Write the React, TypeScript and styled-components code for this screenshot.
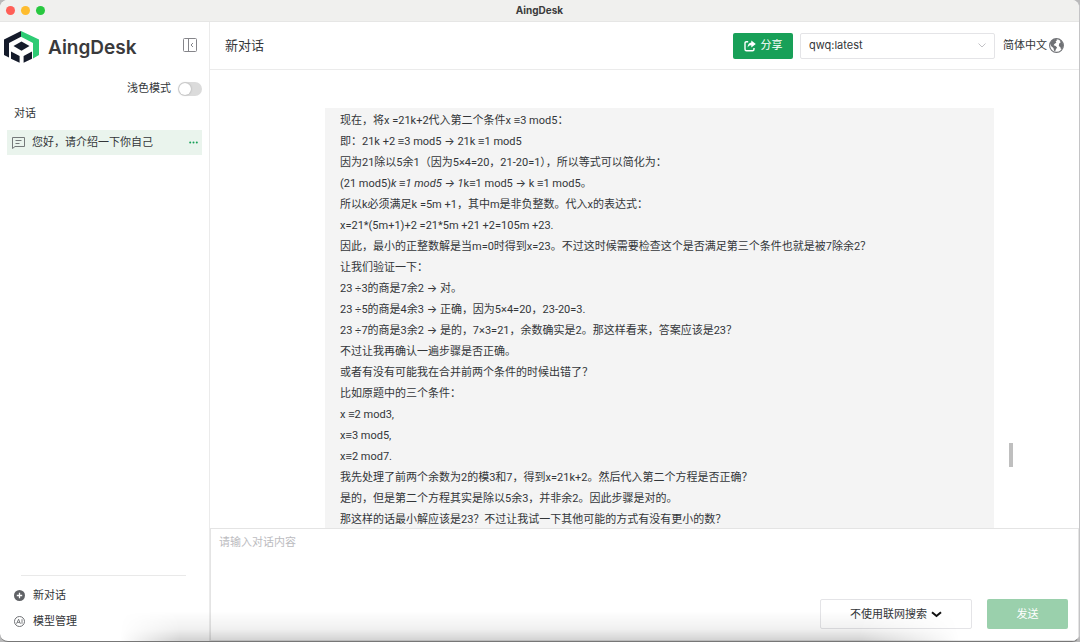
import React from 'react';
import styled, { createGlobalStyle } from 'styled-components';

const GlobalStyle = createGlobalStyle`
  *, *::before, *::after { box-sizing: border-box; }
  body {
    margin: 0;
    background: #b9b9ba;
    color: #333639;
    font-family: Roboto, Inter, "Liberation Sans", "Noto Sans CJK SC", sans-serif;
    font-size: 11px;
    line-height: 21px;
  }
  button, select, textarea { font: inherit; color: inherit; margin: 0; }
  button { padding: 0; border: 0; background: none; cursor: pointer; }
  p, h1, h2 { margin: 0; }
  svg { display: block; flex: none; }
`;

const Window = styled.div`
  position: relative;
  display: flex;
  flex-direction: column;
  height: 100vh;
  border-right: 1px solid #c4c4c6;
  border-bottom: 1px solid #777777;
  border-radius: 8px;
  background: #ffffff;
  overflow: hidden;
`;

const TitleBar = styled.header`
  display: grid;
  grid-template-columns: 1fr auto 1fr;
  align-items: center;
  flex: none;
  height: 22px;
  padding: 0 6px;
  border-bottom: 1px solid #e6e6e5;
  background: #f0f0ee;
`;

const Lights = styled.div`
  display: flex;
  gap: 6px;
`;

const Light = styled.span<{ $color: string }>`
  width: 9px;
  height: 9px;
  border-radius: 50%;
  background: ${(p) => p.$color};
`;

const WindowTitle = styled.span`
  color: #3c3c3c;
  font-family: Inter, sans-serif;
  font-size: 10px;
  font-weight: 700;
`;

const Columns = styled.div`
  display: flex;
  flex: 1;
  min-height: 0;
`;

const Sidebar = styled.aside`
  display: flex;
  flex-direction: column;
  flex: none;
  width: 210px;
  border-right: 1px solid #ebebeb;
`;

const Brand = styled.div`
  display: flex;
  align-items: center;
  height: 50px;
  padding: 0 12px 0 4px;
`;

const BrandName = styled.h1`
  flex: 1;
  margin-left: 9px;
  color: #3a3a3c;
  font-family: Inter, sans-serif;
  font-size: 19px;
  font-weight: 600;
`;

const CollapseButton = styled.button`
  padding-bottom: 4px;
`;

const ModeRow = styled.label`
  display: flex;
  align-items: center;
  justify-content: flex-end;
  gap: 7px;
  height: 33px;
  padding-right: 7px;
`;

const Switch = styled.input`
  appearance: none;
  display: flex;
  align-items: center;
  width: 24px;
  height: 14px;
  margin: 0;
  padding: 0 1px;
  border-radius: 7px;
  background: #dbdbdb;
  &::before {
    content: "";
    width: 12px;
    height: 12px;
    border-radius: 50%;
    background: #ffffff;
    box-shadow: 0 0 2px #999999;
  }
  &:checked { justify-content: flex-end; background: #18a058; }
`;

const SectionLabel = styled.h2`
  padding: 0 14px;
  margin-bottom: 7px;
  font-size: 11px;
  font-weight: 400;
  line-height: 18px;
`;

const Conversation = styled.div`
  display: flex;
  align-items: center;
  height: 25px;
  margin: 0 7px;
  padding: 0 4px 0 5px;
  background: #eaf4ed;
`;

const ConversationName = styled.button`
  display: flex;
  align-items: center;
  flex: 1;
  gap: 7px;
`;

const BottomNav = styled.nav`
  display: flex;
  flex-direction: column;
  gap: 5px;
  margin-top: auto;
  padding: 0 14px 9px;
  &::before {
    content: "";
    height: 1px;
    margin: 0 9px 4px 7px;
    background: #e9e9e9;
  }
`;

const NavButton = styled.button`
  display: flex;
  align-items: center;
  gap: 8px;
`;

const Main = styled.main`
  display: flex;
  flex-direction: column;
  flex: 1;
  min-width: 0;
`;

const Toolbar = styled.div`
  display: flex;
  align-items: center;
  flex: none;
  height: 48px;
  padding: 0 15px;
  border-bottom: 1px solid #ebebeb;
`;

const ChatTitle = styled.h2`
  flex: 1;
  font-size: 13px;
  font-weight: 400;
`;

const ShareButton = styled.button`
  display: flex;
  align-items: center;
  justify-content: center;
  gap: 5px;
  width: 60px;
  height: 26px;
  margin-right: 7px;
  border-radius: 2px;
  background: #18a058;
  color: #ffffff;
`;

const SelectBox = styled.div`
  display: grid;
  align-items: center;
  width: 195px;
  height: 26px;
  border: 1px solid #e4e4e7;
  border-radius: 2px;
  background: #ffffff;
  & > * { grid-area: 1 / 1; }
  & > svg { justify-self: end; margin-right: 8px; pointer-events: none; }
`;

const ModelSelect = styled.select`
  appearance: none;
  width: 100%;
  height: 100%;
  padding: 0 24px 0 8px;
  border: 0;
  background: none;
  font-family: Inter, sans-serif;
`;

const LanguageButton = styled.button`
  display: flex;
  align-items: center;
  gap: 2px;
  margin-left: 8px;
`;

const Scroller = styled.section`
  display: flex;
  flex: 1;
  min-height: 0;
  padding: 38px 66px 0 115px;
  overflow: hidden;
`;

const Message = styled.article`
  flex: 1;
  padding: 2px 15px 0;
  background: #f4f4f4;
  overflow: hidden;
  white-space: nowrap;
`;

const ScrollThumb = styled.div`
  flex: none;
  align-self: flex-end;
  width: 4px;
  height: 24px;
  margin: 0 0 61px 15px;
  background: #bfbfbf;
`;

const Composer = styled.form`
  display: flex;
  flex-direction: column;
  flex: none;
  height: 113px;
  border: 1px solid #e4e4e4;
`;

const Prompt = styled.textarea`
  flex: 1;
  padding: 3px 8px;
  border: 0;
  outline: 0;
  resize: none;
  background: none;
  &::placeholder { color: #bcbcbf; opacity: 1; }
`;

const Actions = styled.div`
  display: flex;
  justify-content: flex-end;
  gap: 15px;
  padding: 0 10px 11px;
`;

const SearchButton = styled.button`
  display: flex;
  align-items: center;
  justify-content: center;
  gap: 4px;
  width: 152px;
  height: 30px;
  border: 1px solid #e4e4e7;
  border-radius: 2px;
  background: #ffffff;
`;

const SendButton = styled.button`
  width: 81px;
  height: 30px;
  border-radius: 2px;
  background: #9ad0ac;
  color: #ffffff;
`;

const BottomShade = styled.div`
  position: absolute;
  right: 120px;
  bottom: 0;
  left: 120px;
  height: 30px;
  background: linear-gradient(to top, rgba(0, 0, 0, 0.18), rgba(0, 0, 0, 0.06) 40%, rgba(0, 0, 0, 0));
  mask-image: linear-gradient(to right, transparent, #000000 60px, #000000 calc(100% - 100px), transparent);
  pointer-events: none;
`;

const lines: React.ReactNode[] = [
  '现在，将x =21k+2代入第二个条件x ≡3 mod5：',
  '即：21k +2 ≡3 mod5 → 21k ≡1 mod5',
  '因为21除以5余1（因为5×4=20，21-20=1），所以等式可以简化为：',
  <>(21 mod5)<em>k ≡1 mod5 → 1</em>k≡1 mod5 → k ≡1 mod5。</>,
  '所以k必须满足k =5m +1，其中m是非负整数。代入x的表达式：',
  'x=21*(5m+1)+2 =21*5m +21 +2=105m +23.',
  '因此，最小的正整数解是当m=0时得到x=23。不过这时候需要检查这个是否满足第三个条件也就是被7除余2？',
  '让我们验证一下：',
  '23 ÷3的商是7余2 → 对。',
  '23 ÷5的商是4余3 → 正确，因为5×4=20，23-20=3.',
  '23 ÷7的商是3余2 → 是的，7×3=21，余数确实是2。那这样看来，答案应该是23？',
  '不过让我再确认一遍步骤是否正确。',
  '或者有没有可能我在合并前两个条件的时候出错了？',
  '比如原题中的三个条件：',
  'x ≡2 mod3,',
  'x≡3 mod5,',
  'x≡2 mod7.',
  '我先处理了前两个余数为2的模3和7，得到x=21k+2。然后代入第二个方程是否正确？',
  '是的，但是第二个方程其实是除以5余3，并非余2。因此步骤是对的。',
  '那这样的话最小解应该是23？不过让我试一下其他可能的方式有没有更小的数？',
];

const Logo = () => (
  <svg width="35" height="32" viewBox="0 0 35 32" aria-hidden="true">
    <path d="M17 0 0 8.5V24l5 2.6V12l12-6.2z" fill="#151b2b" />
    <path d="M17 0l18 8.5V24l-6 3.4V12L17 5.8z" fill="#2dcb74" />
    <path d="M17.5 10.4l8 4.7-8 4.6-8-4.6z" fill="#151b2b" />
    <path d="M7 20.4l8.6 4.6v6.8L7 27.8zM28 20.4 19.6 25v6.8l8.4-4z" fill="#151b2b" />
  </svg>
);

const CollapseIcon = () => (
  <svg width="14" height="14" viewBox="0 0 14 14" fill="none" stroke="#85858a" aria-hidden="true">
    <rect x=".5" y=".5" width="13" height="13" rx="1" />
    <path d="M5.5.5v13M10 5 8 7l2 2" />
  </svg>
);

const ChatIcon = () => (
  <svg width="13" height="12" viewBox="0 0 13 12" fill="none" stroke="#75797a" aria-hidden="true">
    <path d="M.5.5h12v9H3L.5 11.5zM3.5 3.5h6M3.5 6.5h4" />
  </svg>
);

const MoreIcon = () => (
  <svg width="9" height="3" viewBox="0 0 9 3" fill="#18a058" aria-hidden="true">
    <circle cx="1.2" cy="1.5" r="1" /><circle cx="4.5" cy="1.5" r="1" /><circle cx="7.8" cy="1.5" r="1" />
  </svg>
);

const PlusIcon = () => (
  <svg width="11" height="11" viewBox="0 0 11 11" aria-hidden="true">
    <circle cx="5.5" cy="5.5" r="5.5" fill="#606266" />
    <path d="M5.5 2.8v5.4M2.8 5.5h5.4" stroke="#ffffff" strokeWidth="1.3" />
  </svg>
);

const ModelIcon = () => (
  <svg width="11" height="11" viewBox="0 0 11 11" fill="none" stroke="#606266" aria-hidden="true">
    <circle cx="5.5" cy="5.5" r="5" strokeWidth=".9" />
    <path d="M2.5 7.8 4.6 3.2l1.8 4.6M3.3 6.4h2.5M8 3.2v4.6" strokeWidth=".8" />
  </svg>
);

const ShareIcon = () => (
  <svg width="12" height="12" viewBox="0 0 12 12" fill="none" stroke="#ffffff" aria-hidden="true">
    <path d="M4.2 1.7H2.5Q1 1.7 1 3.2v6q0 1.5 1.5 1.5h6q1.5 0 1.5-1.5V8" strokeWidth="1.4" />
    <path d="M7.3.6 11.8 4 7.3 7.4V5.3Q4.8 5.1 3.6 7.6 3.8 3 7.3 2.6z" fill="#ffffff" stroke="none" />
  </svg>
);

const ThinChevron = () => (
  <svg width="8" height="5" viewBox="0 0 8 5" fill="none" stroke="#c2c2c6" aria-hidden="true">
    <path d="M.5.5 4 4 7.5.5" />
  </svg>
);

const BoldChevron = () => (
  <svg width="11" height="7" viewBox="0 0 11 7" fill="none" stroke="#111111" aria-hidden="true">
    <path d="M1 1.2 5.5 5 10 1.2" strokeWidth="2" />
  </svg>
);

const GlobeIcon = () => (
  <svg width="15" height="15" viewBox="0 0 15 15" aria-hidden="true">
    <circle cx="7.5" cy="7.5" r="6.9" fill="#ffffff" stroke="#707276" strokeWidth="1.1" />
    <path d="M1 5.2 3.2 2 7 .8 8.2 2 6.6 3.4 7.4 4.6 5.4 6 4.6 7.2 6.6 8l1.5 1.6L6.8 11.4l-.8 2.4L5 12.6 4.4 10 2 8zM10.4 1.2l2.8 2.5 1 3L13.8 9.8 12 11.6l-.6-2.4L9.8 8l.4-2.4 1.4-1.2z" fill="#707276" />
  </svg>
);

export default function App() {
  return (
    <>
      <GlobalStyle />
      <Window>
        <TitleBar>
          <Lights>
            <Light $color="#ff5f57" />
            <Light $color="#febc2e" />
            <Light $color="#28c840" />
          </Lights>
          <WindowTitle>AingDesk</WindowTitle>
        </TitleBar>
        <Columns>
          <Sidebar>
            <Brand>
              <Logo />
              <BrandName>AingDesk</BrandName>
              <CollapseButton type="button" aria-label="收起侧栏"><CollapseIcon /></CollapseButton>
            </Brand>
            <ModeRow>
              浅色模式
              <Switch type="checkbox" role="switch" />
            </ModeRow>
            <SectionLabel>对话</SectionLabel>
            <Conversation>
              <ConversationName type="button"><ChatIcon />您好，请介绍一下你自己</ConversationName>
              <button type="button" aria-label="更多"><MoreIcon /></button>
            </Conversation>
            <BottomNav>
              <NavButton type="button"><PlusIcon />新对话</NavButton>
              <NavButton type="button"><ModelIcon />模型管理</NavButton>
            </BottomNav>
          </Sidebar>
          <Main>
            <Toolbar>
              <ChatTitle>新对话</ChatTitle>
              <ShareButton type="button"><ShareIcon />分享</ShareButton>
              <SelectBox>
                <ModelSelect aria-label="模型"><option>qwq:latest</option></ModelSelect>
                <ThinChevron />
              </SelectBox>
              <LanguageButton type="button">简体中文<GlobeIcon /></LanguageButton>
            </Toolbar>
            <Scroller>
              <Message>
                {lines.map((line, i) => <p key={i}>{line}</p>)}
              </Message>
              <ScrollThumb />
            </Scroller>
            <Composer>
              <Prompt aria-label="对话内容" placeholder="请输入对话内容" />
              <Actions>
                <SearchButton type="button">不使用联网搜索<BoldChevron /></SearchButton>
                <SendButton type="button">发送</SendButton>
              </Actions>
            </Composer>
          </Main>
        </Columns>
        <BottomShade />
      </Window>
    </>
  );
}
